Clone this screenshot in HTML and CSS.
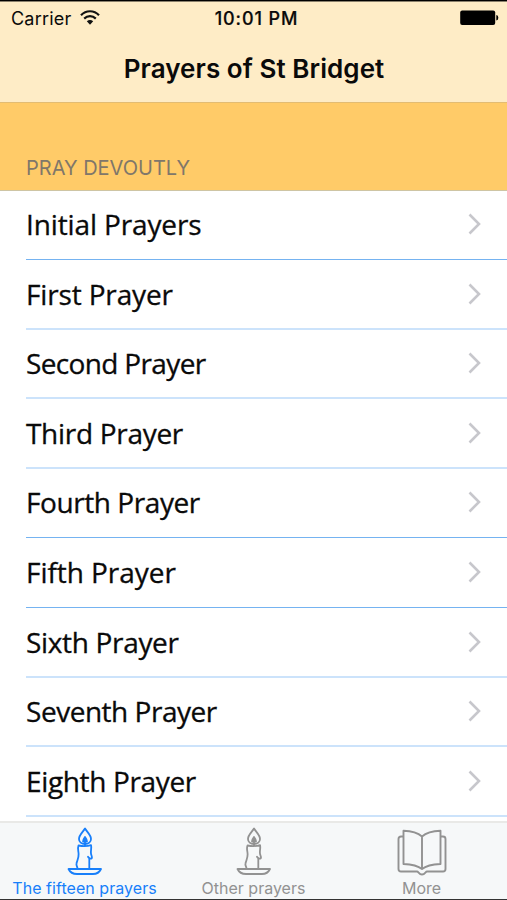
FILE: index.html
```html
<!DOCTYPE html>
<html lang="en">
<head>
<meta charset="utf-8">
<title>Prayers of St Bridget</title>
<link rel="stylesheet" href="styles.css">
</head>
<body>
<svg class="defs" width="0" height="0">
  <symbol id="chev" viewBox="0 0 14 22"><path d="M1.500 1.500 11 11l-9.500 9.500" fill="none" stroke="#c7c7cc" stroke-width="2.600"/></symbol>
  <symbol id="candle" viewBox="0 0 36 50">
    <g fill="none" stroke="currentColor" stroke-width="1.800" stroke-linejoin="round" stroke-linecap="round">
      <path d="M18 1.500C16 5 12 8 12 12c0 3 2.500 5 6 5s6-2 6-5c0-4-4-7-6-10.500z"/>
      <path d="M18 10c-1.500 2-2.200 3-2 4.500h4c.2-1.500-.5-2.500-2-4.500z" fill="currentColor"/>
      <path d="M18 15v3M10.500 41.500c-.2-2-1.500-3-1-5 .5-3 2.300-5 2.100-9.500-.1-3-1.300-5.500-.1-8.500 4 .7 9 .8 12.500-.4.800 3-.5 5.500 0 8.600.2 2 1.500 3 .8 4.500-1.300 1-3-.2-3.800-1.500M22.300 32v9.500"/>
      <path d="M1.500 42h32.500c-1.500 3.200-4 5-8 5H10c-4 0-7-1.800-8.500-5z"/>
    </g>
  </symbol>
</svg>
<div class="phone">
  <header class="top">
    <div class="status">
      <div class="carrier"><span class="carrier-name">Carrier</span>
        <svg class="wifi" viewBox="0 0 20 15"><g fill="none" stroke="#111" stroke-width="2.200"><path d="M1 5.300C6-.1 14-.1 19 5.300M4.200 8.600c3.300-3.200 8.300-3.200 11.600 0"/></g><path d="M6.800 11.300c2-1.700 4.400-1.700 6.400 0L10 14.700z" fill="#111"/></svg>
      </div>
      <div class="time">10:01 PM</div>
      <svg class="battery" viewBox="0 0 39 16"><rect x=".2" y=".5" width="35" height="14.500" rx="2"/><path d="M36.300 5q2 .3 2 2.800t-2 2.800z"/></svg>
    </div>
    <h1><span class="title">Prayers of St Bridget</span></h1>
  </header>
  <div class="section"><span class="section-name">PRAY DEVOUTLY</span></div>
  <ul class="list">
    <li class="strong"><span class="r1">Initial Prayers</span><svg class="chev"><use href="#chev"/></svg></li>
    <li><span class="r2">First Prayer</span><svg class="chev"><use href="#chev"/></svg></li>
    <li><span class="r3">Second Prayer</span><svg class="chev"><use href="#chev"/></svg></li>
    <li><span class="r4">Third Prayer</span><svg class="chev"><use href="#chev"/></svg></li>
    <li class="strong"><span class="r5">Fourth Prayer</span><svg class="chev"><use href="#chev"/></svg></li>
    <li class="strong"><span class="r6">Fifth Prayer</span><svg class="chev"><use href="#chev"/></svg></li>
    <li><span class="r7">Sixth Prayer</span><svg class="chev"><use href="#chev"/></svg></li>
    <li><span class="r8">Seventh Prayer</span><svg class="chev"><use href="#chev"/></svg></li>
    <li><span class="r9">Eighth Prayer</span><svg class="chev"><use href="#chev"/></svg></li>
  </ul>
  <nav class="tabs">
    <div class="tab active"><svg class="candle"><use href="#candle"/></svg><span class="t1">The fifteen prayers</span></div>
    <div class="tab"><svg class="candle"><use href="#candle"/></svg><span class="t2">Other prayers</span></div>
    <div class="tab"><svg class="book" viewBox="0 0 50 50"><g fill="none" stroke="currentColor" stroke-width="1.900" stroke-linejoin="round"><path d="M25 9.500C20 5 14 4 6.500 3.800V37C13 37.300 20 38 25 42c5-4 12-4.700 18.500-5V3.800C36 4 30 5 25 9.500zM25 9.500V42"/><path d="M6.500 9.500H4q-2.500 0-2.500 2.500v30q0 2.500 2.500 2.500h16c1.500 0 2 3 5 3s3.500-3 5-3h16q2.500 0 2.500-2.500V12q0-2.500-2.500-2.500h-2.500"/></g></svg><span class="t3">More</span></div>
  </nav>
</div>
</body>
</html>
```
FILE: styles.css
```css
* { box-sizing: border-box; }
body { margin: 0; background: #fff; font-family: Inter, "Liberation Sans", sans-serif; color: #0a0a0a; }
.defs { position: absolute; }
.phone { width: 507px; height: 900px; display: flex; flex-direction: column; overflow: hidden; border-top: 1px solid #000; border-bottom: 1px solid #333; }
.top { height: 102px; background: #feecc6; border-top: 1px solid #8a806c; border-bottom: 1px solid #e3bc72; }
.status { height: 33px; padding: 0 8px 0 11px; display: grid; grid-template-columns: 1fr auto 1fr; align-items: center; font-size: 18px; }
.carrier { display: flex; align-items: center; gap: 9px; }
.carrier-name { letter-spacing: 0.2px; }
.wifi { width: 20px; height: 15px; margin-top: -2px; }
.time { font-weight: 500; letter-spacing: 0.9px; padding-left: 3px; -webkit-text-stroke: 0.2px; }
.battery { width: 39px; height: 16px; justify-self: end; margin-top: -1px; }
h1 { margin: 0; height: 67px; line-height: 68px; text-align: center; font-size: 26px; font-weight: 600; letter-spacing: 0.06px; padding-left: 1px; }
.section { height: 88px; padding: 53px 0 0 26px; background: #ffcb68; border-bottom: 1px solid #cec5a4; color: #80776a; font-size: 20px; line-height: 24px; }
.list { list-style: none; margin: 0; padding: 0 0 0 26px; height: 630px; display: grid; grid-template-rows: 69px 70px 69px 70px 69px 70px 70px 69px 70px; font-family: "Open Sans", sans-serif; font-size: 28px; }
.list li { display: flex; align-items: center; justify-content: space-between; padding: 0 25px 1px 0; border-bottom: 2px solid #cce3fb; }
.list .strong { border-bottom: 1px solid #75b3f1; padding-bottom: 2px; }
.list span { -webkit-text-stroke: 0.3px; }
.r1 { letter-spacing: -0.13px; }
.r2 { letter-spacing: -0.15px; }
.r3 { letter-spacing: -0.65px; }
.r4 { letter-spacing: -0.3px; }
.r5 { letter-spacing: -0.43px; }
.r6 { letter-spacing: -0.05px; }
.r7 { letter-spacing: -0.33px; }
.r8 { letter-spacing: -0.47px; }
.r9 { letter-spacing: -0.35px; }
.chev { width: 14px; height: 22px; }
.tabs { height: 78px; display: grid; grid-template-columns: repeat(3, 1fr); background: #f6f8f9; border-top: 2px solid #e9e9e7; }
.tab { display: flex; flex-direction: column; align-items: center; color: #929292; font-size: 16px; line-height: 22px; padding-top: 4px; white-space: nowrap; }
.tab:last-child { padding-right: 2px; }
.active { color: #187ffa; }
.t1 { letter-spacing: 0.05px; }
.candle { width: 36px; height: 50px; }
.book { width: 50px; height: 50px; }
```
